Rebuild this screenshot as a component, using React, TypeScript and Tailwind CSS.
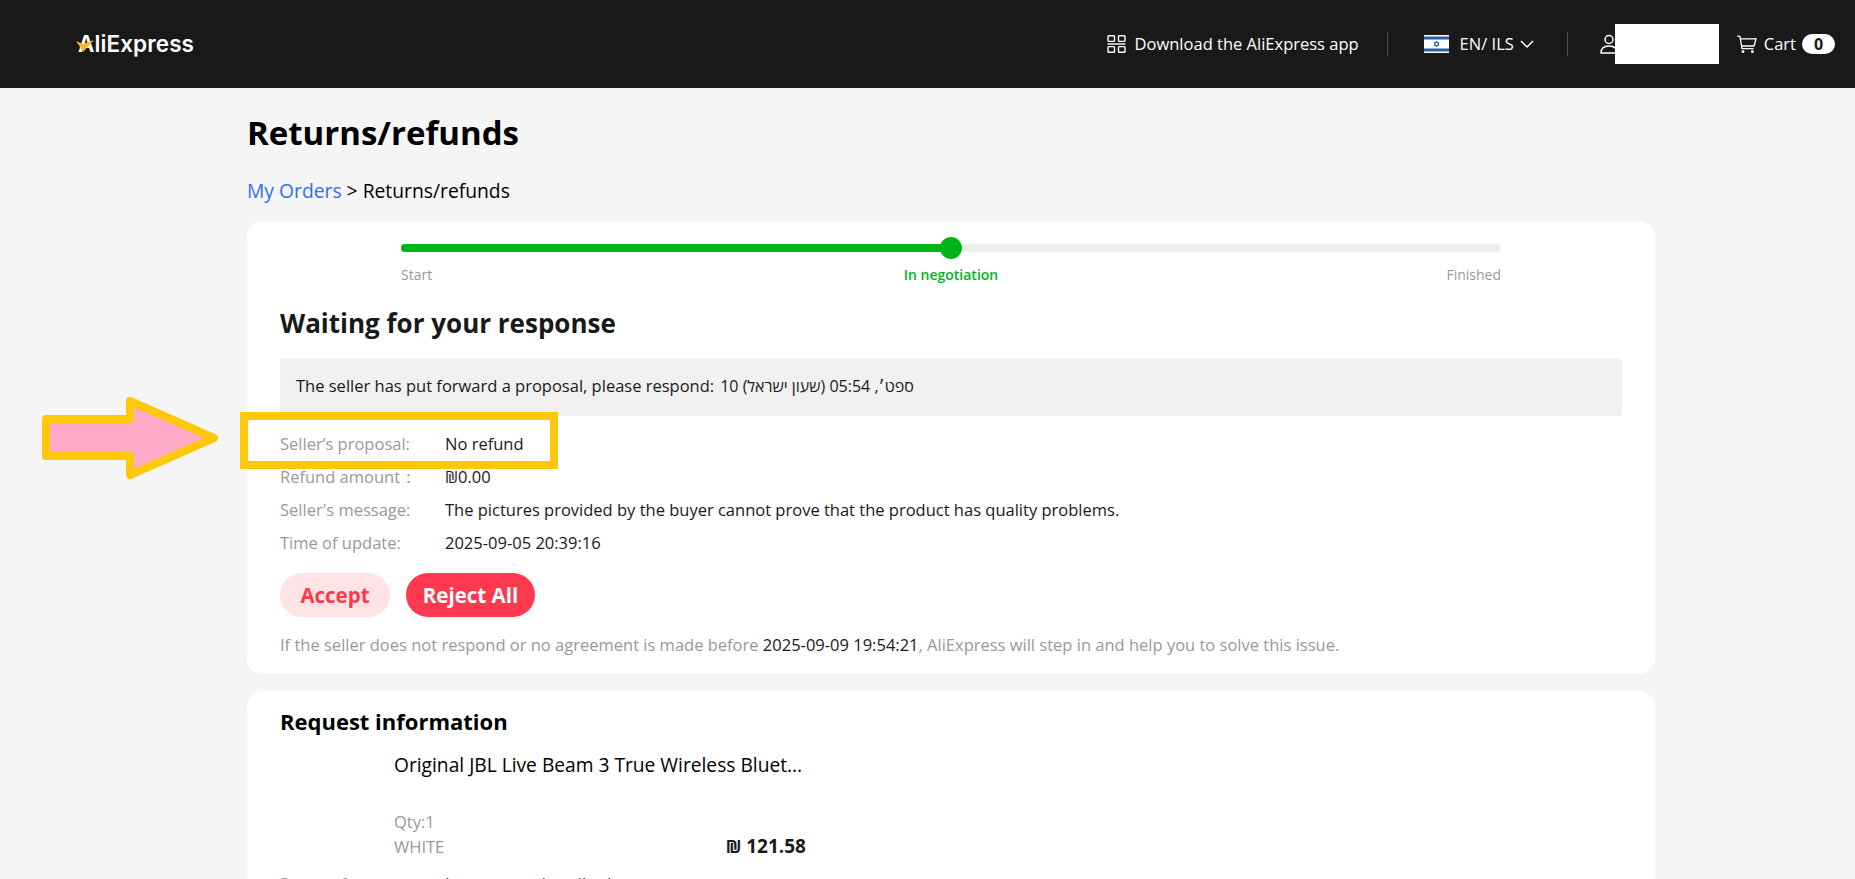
import React from "react";

const rows = [
  { label: "Seller’s proposal:", value: "No refund" },
  { label: "Refund amount：", value: "₪0.00" },
  { label: "Seller's message:", value: "The pictures provided by the buyer cannot prove that the product has quality problems." },
  { label: "Time of update:", value: "2025-09-05 20:39:16" },
];

const Logo = () => (
  <div className="relative ml-[76px] flex h-[40px] w-[118px] items-center">
    <span className="ml-[2px] font-['Inter',sans-serif] text-[22.5px] font-semibold tracking-[0.1px] text-white">AliExpress</span>
    <svg className="absolute left-0 top-[9px]" width="19" height="20" viewBox="0 0 19 20">
      <path d="M0 8 L7 11 L18 7 L7 19 L3.5 13 Z" fill="#fdb52a" />
    </svg>
  </div>
);

const QrIcon = () => (
  <svg width="19" height="18" viewBox="0 0 19 18" fill="none" stroke="white" strokeWidth="1.4">
    <rect x="1" y="0.8" width="6.5" height="5.6" rx="0.8" />
    <rect x="11.5" y="0.8" width="6.5" height="5.6" rx="0.8" />
    <path d="M0.5 9 H18.5" />
    <rect x="1" y="11.6" width="6.5" height="5.6" rx="0.8" />
    <rect x="11.5" y="11.6" width="6.5" height="5.6" rx="0.8" />
  </svg>
);

const Flag = () => (
  <svg width="25" height="18" viewBox="0 0 25 18">
    <rect width="25" height="18" fill="white" />
    <rect y="1.5" width="25" height="3" fill="#2b5ea8" />
    <rect y="13.5" width="25" height="3" fill="#2b5ea8" />
    <path d="M12.5 6 L15 10.5 H10 Z M12.5 12 L10 7.5 H15 Z" fill="none" stroke="#2b5ea8" strokeWidth="0.8" />
  </svg>
);

const UserIcon = () => (
  <svg width="18" height="20" viewBox="0 0 18 20" fill="none" stroke="white" strokeWidth="1.5">
    <circle cx="9" cy="5.5" r="4" />
    <path d="M1 19 C1 14 4 12 9 12 C14 12 17 14 17 19 Z" />
  </svg>
);

const CartIcon = () => (
  <svg width="20" height="18" viewBox="0 0 20 18" fill="none" stroke="white" strokeWidth="1.3">
    <path d="M0.3 0.8 L3 1.6 L5 13.6 H16.6" />
    <path d="M3.4 3.8 H19 L17 11 H4.6" />
    <circle cx="6" cy="16.6" r="0.8" fill="white" />
    <circle cx="15.4" cy="16.6" r="0.8" fill="white" />
  </svg>
);

const Arrow = () => (
  <svg className="absolute left-[42px] top-[397px]" width="177" height="82" viewBox="0 0 177 82">
    <path
      d="M4 22 H88 V4 L172 41 L88 78 V59 H4 Z"
      fill="#ffaac8"
      stroke="#ffc80a"
      strokeWidth="8"
      strokeLinejoin="round"
    />
  </svg>
);

export default function App() {
  return (
    <div className="relative h-[879px] overflow-hidden bg-[#f5f5f5] font-['Open_Sans',sans-serif] text-[16.5px] text-[#191919]">
      <header className="flex h-[88px] items-center bg-[#191919] text-white">
        <Logo />
        <div className="ml-auto flex items-center">
          <QrIcon />
          <span className="ml-[9px]">Download the AliExpress app</span>
          <div className="ml-[28px] h-[24px] w-px bg-[#4d4d4d]" />
          <div className="ml-[36px]"><Flag /></div>
          <span className="ml-[11px]">EN/ ILS</span>
          <svg className="ml-[5px]" width="16" height="16" viewBox="0 0 16 16" fill="none" stroke="white" strokeWidth="1.5">
            <path d="M2 5 L8 11 L14 5" />
          </svg>
          <div className="ml-[32px] h-[24px] w-px bg-[#4d4d4d]" />
          <div className="ml-[32px]"><UserIcon /></div>
          <div className="-ml-[3px] h-[40px] w-[104px] bg-white" />
          <div className="ml-[18px]"><CartIcon /></div>
          <span className="ml-[7px]">Cart</span>
          <span className="ml-[6px] flex h-[20px] w-[33px] items-center justify-center rounded-full bg-white text-[16px] font-bold leading-none text-[#191919]">0</span>
          <div className="w-[20px]" />
        </div>
      </header>

      <main className="ml-[247px] w-[1408px]">
        <h1 className="mt-[23px] text-[33px] font-bold leading-[44px] text-black">Returns/refunds</h1>
        <div className="mt-[23px] text-[19.3px] leading-[26px] text-black">
          <span className="text-[#2e6ff2]">My Orders</span> &gt; Returns/refunds
        </div>

        <section className="mt-[17px] h-[453px] rounded-[16px] bg-white px-[33px]">
          <div className="mx-[121px] w-[1100px] pt-[16px]">
            <div className="relative h-[22px]">
              <div className="absolute top-[7px] h-[8px] w-full rounded-full bg-[#ededed]" />
              <div className="absolute top-[7px] h-[8px] w-1/2 rounded-full bg-[#00b517]" />
              <div className="absolute left-[539px] top-0 h-[22px] w-[22px] rounded-full bg-[#00b517]" />
            </div>
            <div className="mt-[6px] grid grid-cols-3 text-[14px] leading-[20px] text-[#999999]">
              <span>Start</span>
              <span className="text-center font-semibold text-[#00b517]">In negotiation</span>
              <span className="text-right">Finished</span>
            </div>
          </div>

          <h2 className="mt-[21px] text-[26px] font-bold leading-[34px] text-[#191919]">Waiting for your response</h2>

          <div className="mt-[18px] flex h-[58px] items-center rounded-[4px] bg-[#f1f1f1] px-[16px] pb-[2px]">
            <span>
              The seller has put forward a proposal, please respond:
              <span className="ml-[6px] text-[16px]">10 ספט׳, 05:54 (שעון ישראל)</span>
            </span>
          </div>

          <div className="mt-[12px]">
            {rows.map((row) => (
              <div key={row.label} className="flex h-[33px] items-center">
                <span className="w-[165px] text-[#999999]">{row.label}</span>
                <span className="text-[#191919]">{row.value}</span>
              </div>
            ))}
          </div>

          <div className="mt-[13px] flex gap-[16px]">
            <button className="h-[44px] w-[110px] rounded-full bg-[#ffe3e5] text-[20.5px] font-bold text-[#fd384f]">Accept</button>
            <button className="h-[44px] w-[129px] rounded-full bg-[#fd384f] text-[20.5px] font-bold text-white">Reject All</button>
          </div>

          <p className="mt-[17px] leading-[22px] text-[#999999]">
            If the seller does not respond or no agreement is made before{" "}
            <span className="text-[#191919]">2025-09-09 19:54:21</span>, AliExpress will step in and help you to solve this issue.
          </p>
        </section>

        <section className="mt-[17px] rounded-t-[16px] bg-white px-[33px] pb-[40px] pt-[16px]">
          <h2 className="text-[22px] font-bold leading-[28px] text-black">Request information</h2>
          <div className="ml-[114px] mt-[17px] w-[412px]">
            <div className="text-[19.2px] leading-[26px] text-black">Original JBL Live Beam 3 True Wireless Bluet...</div>
            <div className="mt-[32px] leading-[24px] text-[#999999]">Qty:1</div>
            <div className="flex items-center justify-between leading-[26px] text-[#999999]">
              <span>WHITE</span>
              <span className="-mt-[2px] text-[19px] font-bold text-[#191919]">
                <span className="text-[17px]">₪</span> 121.58
              </span>
            </div>
          </div>
          <div className="mt-[11px] flex h-[26px] items-center">
            <span className="w-[165px] text-[#999999]">Reason for return:</span>
            <span>Item not as described</span>
          </div>
        </section>
      </main>

      <Arrow />
      <div className="absolute left-[240px] top-[412px] h-[57px] w-[318px] border-[8px] border-[#ffc80a]" />
    </div>
  );
}
